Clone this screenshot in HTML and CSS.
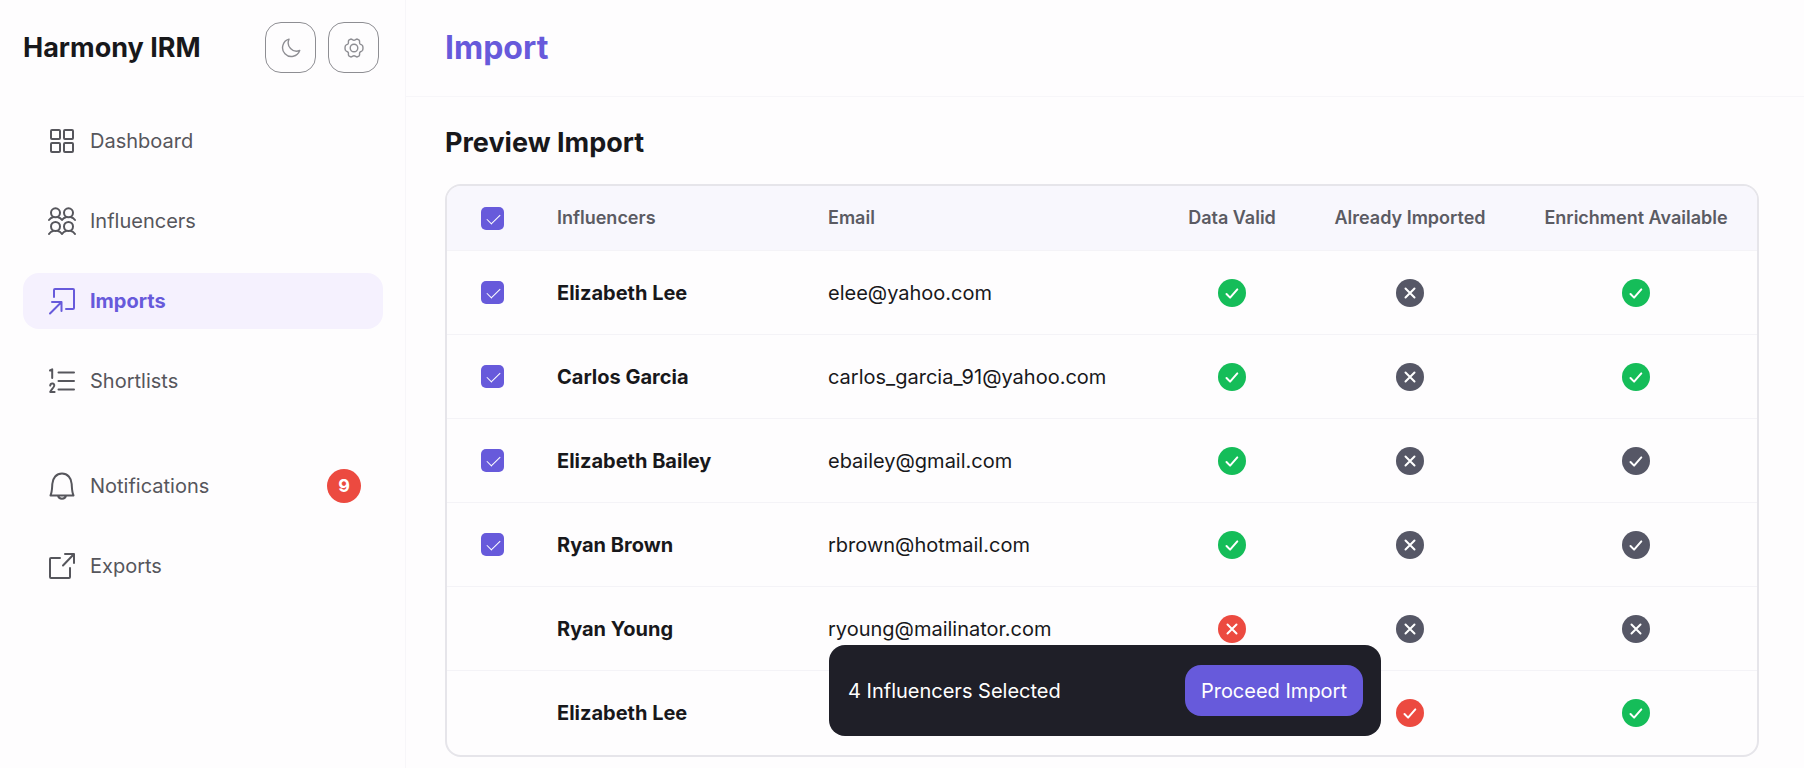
FILE: index.html
```html
<!DOCTYPE html>
<html lang="en">
<head>
<meta charset="utf-8">
<title>Harmony IRM – Import</title>
<link rel="stylesheet" href="styles.css">
</head>
<body>
<svg class="sprite" aria-hidden="true">
  <symbol id="check" viewBox="0 0 28 28"><circle cx="14" cy="14" r="14" fill="currentColor"/><path class="mark" d="M8.500 15l3.600 3.600 7.200-8.200"/></symbol>
  <symbol id="cross" viewBox="0 0 28 28"><circle cx="14" cy="14" r="14" fill="currentColor"/><path class="mark" d="M9.500 9.500l9 9M18.500 9.500l-9 9"/></symbol>
</svg>
<div class="app">
  <aside class="sidebar">
    <div class="brand">
      <span class="brand-name">Harmony IRM</span>
      <div class="brand-actions">
        <button class="icon-button" type="button" aria-label="Toggle dark mode">
          <svg class="icon-small" viewBox="0 0 20 20"><path d="M8 1.200A8.800 8.800 0 1 0 18.700 12.500 8.400 8.400 0 0 1 8 1.200z"/></svg>
        </button>
        <button class="icon-button" type="button" aria-label="Settings">
          <svg class="icon-small" viewBox="0 0 20 20"><circle cx="10" cy="10" r="3.800"/><path d="M10 2.200c1.500 0 2-1.400 3.300-1.100l1.900 1.100c.9 1-.1 2.100.6 3.400.8 1.300 2.200.9 2.800 2.200.5 1.400.5 3 0 4.400-.6 1.300-2 .9-2.800 2.200-.7 1.300.3 2.400-.6 3.400l-1.900 1.100c-1.300.3-1.800-1.100-3.300-1.100s-2 1.400-3.300 1.100l-1.900-1.100c-.9-1 .1-2.100-.6-3.400-.8-1.300-2.200-.9-2.800-2.200-.5-1.400-.5-3 0-4.400.6-1.300 2-.9 2.800-2.200.7-1.300-.3-2.400.6-3.400l1.900-1.100C8 .8 8.500 2.200 10 2.200z"/></svg>
        </button>
      </div>
    </div>
    <nav class="nav">
      <a class="nav-item" href="#">
        <svg class="icon" viewBox="0 0 28 28"><rect x="3" y="3" width="9" height="9" rx="1"/><rect x="16" y="3" width="9" height="9" rx="1"/><rect x="3" y="16" width="9" height="9" rx="1"/><rect x="16" y="16" width="9" height="9" rx="1"/></svg>
        Dashboard
      </a>
      <a class="nav-item" href="#">
        <svg class="icon" viewBox="0 0 28 28"><circle cx="7.500" cy="5.800" r="4.500"/><circle cx="20.500" cy="5.800" r="4.500"/><circle cx="7.500" cy="19.500" r="4.500"/><circle cx="20.500" cy="19.500" r="4.500"/><path d="M1 13c1.200-1.600 2.500-2.500 4-2.800M10 10.200c1.500.3 2.800 1.200 4 2.800 1.200-1.600 2.500-2.500 4-2.800M23 10.200c1.500.3 2.800 1.200 4 2.800M1 27c1.200-1.800 2.500-2.700 4-3M10 24c1.500.3 2.800 1.200 4 3 1.200-1.800 2.500-2.700 4-3M23 24c1.500.3 2.800 1.200 4 3"/></svg>
        Influencers
      </a>
      <a class="nav-item active" href="#" aria-current="page">
        <svg class="icon" viewBox="0 0 28 28"><path d="M6 10V3a1 1 0 0 1 1-1h18a1 1 0 0 1 1 1v18a1 1 0 0 1-1 1h-7M4 15h9.500v9M13.500 15L2 26.500"/></svg>
        Imports
      </a>
      <a class="nav-item" href="#">
        <svg class="icon" viewBox="0 0 28 28"><path d="M10.500 5.500H26M10.500 14H26M10.500 22.500H26M2 3.500l2.200-1.200V11M2.200 18.600c.3-3 4.600-2.700 4 .3-.3 1.600-2.800 3.500-4 6h4.400"/></svg>
        Shortlists
      </a>
    </nav>
    <nav class="nav nav-secondary">
      <a class="nav-item" href="#">
        <svg class="icon" viewBox="0 0 28 28"><path d="M2.500 23.500c1.600-3.500 1.500-6 1.800-11.500C4.600 6 8.500 1.500 14 1.500S23.400 6 23.700 12c.3 5.500.2 8 1.800 11.500zM10 23.800c.8 3.800 7.200 3.800 8 0"/></svg>
        Notifications
        <span class="badge">9</span>
      </a>
      <a class="nav-item" href="#">
        <svg class="icon" viewBox="0 0 28 28"><path d="M12 6H3a1 1 0 0 0-1 1v18a1 1 0 0 0 1 1h18a1 1 0 0 0 1-1v-9M17 2h9v9M26 2L15 13.500"/></svg>
        Exports
      </a>
    </nav>
  </aside>
  <div class="page">
    <header class="topbar"><h1 class="page-title">Import</h1></header>
    <main class="content">
      <h2 class="section-title">Preview Import</h2>
      <div class="table-card">
        <table class="table">
          <colgroup><col class="col-select"><col class="col-name"><col class="col-email"><col class="col-valid"><col class="col-imported"><col class="col-enrich"></colgroup>
          <thead>
            <tr><th><input class="tick" type="checkbox" checked aria-label="Select all"></th><th class="text">Influencers</th><th class="text">Email</th><th>Data Valid</th><th>Already Imported</th><th>Enrichment Available</th></tr>
          </thead>
          <tbody>
            <tr><td><input class="tick" type="checkbox" checked aria-label="Select Elizabeth Lee"></td><td class="text name">Elizabeth Lee</td><td class="text">elee@yahoo.com</td><td><svg class="status good"><use href="#check"/></svg></td><td><svg class="status"><use href="#cross"/></svg></td><td><svg class="status good"><use href="#check"/></svg></td></tr>
            <tr><td><input class="tick" type="checkbox" checked aria-label="Select Carlos Garcia"></td><td class="text name">Carlos Garcia</td><td class="text">carlos_garcia_91@yahoo.com</td><td><svg class="status good"><use href="#check"/></svg></td><td><svg class="status"><use href="#cross"/></svg></td><td><svg class="status good"><use href="#check"/></svg></td></tr>
            <tr><td><input class="tick" type="checkbox" checked aria-label="Select Elizabeth Bailey"></td><td class="text name">Elizabeth Bailey</td><td class="text">ebailey@gmail.com</td><td><svg class="status good"><use href="#check"/></svg></td><td><svg class="status"><use href="#cross"/></svg></td><td><svg class="status"><use href="#check"/></svg></td></tr>
            <tr><td><input class="tick" type="checkbox" checked aria-label="Select Ryan Brown"></td><td class="text name">Ryan Brown</td><td class="text">rbrown@hotmail.com</td><td><svg class="status good"><use href="#check"/></svg></td><td><svg class="status"><use href="#cross"/></svg></td><td><svg class="status"><use href="#check"/></svg></td></tr>
            <tr><td></td><td class="text name">Ryan Young</td><td class="text">ryoung@mailinator.com</td><td><svg class="status bad"><use href="#cross"/></svg></td><td><svg class="status"><use href="#cross"/></svg></td><td><svg class="status"><use href="#cross"/></svg></td></tr>
            <tr><td></td><td class="text name">Elizabeth Lee</td><td></td><td></td><td><svg class="status bad"><use href="#check"/></svg></td><td><svg class="status good"><use href="#check"/></svg></td></tr>
          </tbody>
        </table>
      </div>
    </main>
    <div class="selection-bar">
      <span>4 Influencers Selected</span>
      <button class="proceed" type="button">Proceed Import</button>
    </div>
  </div>
</div>
</body>
</html>
```
FILE: styles.css
```css
* { box-sizing: border-box; }

body {
  margin: 0;
  background: #fefdfe;
  color: #18181b;
  font: 20px/24px Inter, "Liberation Sans", sans-serif;
}

button, input { font: inherit; }
h1, h2 { margin: 0; }
.sprite { display: none; }

.app { display: flex; min-height: 100vh; }

.sidebar {
  flex: 0 0 406px;
  padding: 0 22px 24px 23px;
  border-right: 1px solid #f7f6f9;
}

.brand {
  display: flex;
  align-items: center;
  justify-content: space-between;
  height: 95px;
  padding-right: 4px;
}
.brand-name { font-size: 27px; font-weight: 700; line-height: 36px; }
.brand-actions { display: flex; gap: 12px; }
.icon-button {
  display: grid;
  place-items: center;
  width: 51px;
  height: 51px;
  padding: 0;
  border: 1px solid #8e8e93;
  border-radius: 16px;
  background: none;
  color: #8e8e93;
}
.icon-small { width: 20px; height: 20px; fill: none; stroke: currentColor; stroke-width: 1.4; stroke-linejoin: round; }

.nav { display: flex; flex-direction: column; gap: 24px; padding-top: 18px; }
.nav-secondary { padding-top: 49px; }
.nav-item {
  display: flex;
  align-items: center;
  gap: 14px;
  height: 56px;
  padding: 0 22px 0 25px;
  border-radius: 16px;
  color: #56565c;
  text-decoration: none;
}
.nav-item.active { background: #f5f1fe; color: #675adb; font-weight: 700; }
.icon { width: 28px; height: 28px; fill: none; stroke: currentColor; stroke-width: 2; stroke-linecap: round; stroke-linejoin: round; }
.badge {
  display: grid;
  place-items: center;
  width: 34px;
  height: 34px;
  margin-left: auto;
  border-radius: 50%;
  background: #ec4a40;
  color: #fff;
  font-size: 18px;
  font-weight: 700;
}

.page { position: relative; flex: 1; min-width: 0; }
.topbar {
  display: flex;
  align-items: center;
  height: 97px;
  padding: 0 39px;
  border-bottom: 1px solid #f7f6f9;
}
.page-title { color: #675adb; font-size: 32px; font-weight: 700; line-height: 40px; }
.content { padding: 28px 45px 11px 39px; }
.section-title { font-size: 27px; font-weight: 700; line-height: 36px; }

.table-card {
  margin-top: 23px;
  overflow: hidden;
  border: 2px solid #e6e5ea;
  border-radius: 16px;
}
.table { width: 100%; border-collapse: separate; border-spacing: 0; table-layout: fixed; }
.col-select { width: 90px; }
.col-name { width: 271px; }
.col-email { width: 350px; }
.col-valid { width: 148px; }
.col-imported { width: 208px; }
.col-enrich { width: 244px; }

th, td { padding: 0; text-align: center; vertical-align: middle; border-bottom: 1px solid #f4f3f7; }
th { height: 65px; background: #f8f7fd; color: #5b5b63; font-size: 18px; font-weight: 600; white-space: nowrap; }
td { height: 84px; }
tbody tr:last-child td { border-bottom: 0; }
.text { padding-left: 20px; text-align: left; }
.name { font-weight: 700; }

.tick {
  display: block;
  appearance: none;
  width: 23px;
  height: 23px;
  margin: 0 auto;
  border-radius: 5px;
  background: #675adb;
  position: relative;
}
.tick:checked::after {
  content: "";
  position: absolute;
  left: 9px;
  top: 4px;
  width: 6px;
  height: 12px;
  border: solid #fff;
  border-width: 0 1px 1px 0;
  transform: rotate(45deg);
}

.status { display: block; width: 28px; height: 28px; margin: 0 auto; color: #565766; }
.status.good { color: #15bd59; }
.status.bad { color: #ec4a40; }
.mark { fill: none; stroke: #fff; stroke-width: 2; stroke-linecap: round; stroke-linejoin: round; }

.selection-bar {
  position: absolute;
  left: 50%;
  bottom: 32px;
  transform: translateX(-50%);
  display: flex;
  align-items: center;
  justify-content: space-between;
  width: 552px;
  padding: 20px 18px 20px 19px;
  border-radius: 16px;
  background: #1f1f28;
  color: #fff;
}
.proceed {
  height: 51px;
  padding: 0 16px;
  border: 0;
  border-radius: 16px;
  background: #675adb;
  color: #fff;
}
```
